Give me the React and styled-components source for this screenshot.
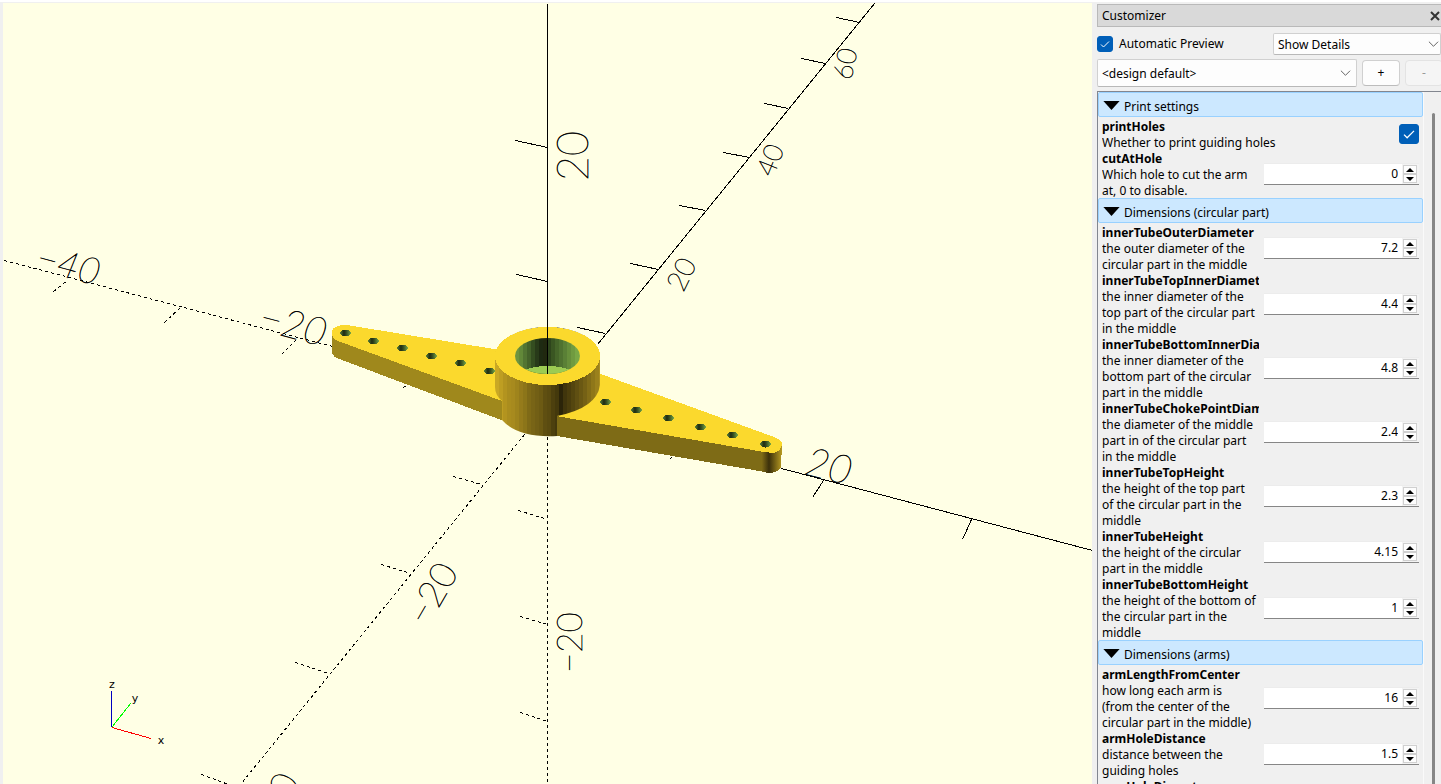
import { useState } from "react";
import styled, { createGlobalStyle } from "styled-components";

const sections = [
    {
        title: "Print settings",
        params: [
            { name: "printHoles", text: "Whether to print guiding holes", type: "bool", value: true },
            { name: "cutAtHole", text: "Which hole to cut the arm\nat, 0 to disable.", value: "0" },
        ],
    },
    {
        title: "Dimensions (circular part)",
        params: [
            { name: "innerTubeOuterDiameter", text: "the outer diameter of the\ncircular part in the middle", value: "7.2" },
            { name: "innerTubeTopInnerDiameter", text: "the inner diameter of the\ntop part of the circular part\nin the middle", value: "4.4" },
            { name: "innerTubeBottomInnerDiameter", text: "the inner diameter of the\nbottom part of the circular\npart in the middle", value: "4.8" },
            { name: "innerTubeChokePointDiameter", text: "the diameter of the middle\npart in of the circular part\nin the middle", value: "2.4" },
            { name: "innerTubeTopHeight", text: "the height of the top part\nof the circular part in the\nmiddle", value: "2.3" },
            { name: "innerTubeHeight", text: "the height of the circular\npart in the middle", value: "4.15" },
            { name: "innerTubeBottomHeight", text: "the height of the bottom of\nthe circular part in the\nmiddle", value: "1" },
        ],
    },
    {
        title: "Dimensions (arms)",
        params: [
            { name: "armLengthFromCenter", text: "how long each arm is\n(from the center of the\ncircular part in the middle)", value: "16" },
            { name: "armHoleDistance", text: "distance between the\nguiding holes", value: "1.5" },
            { name: "armHoleDiameter", text: "diameter of the\nguiding holes", value: "1" },
        ],
    },
];

// [x1, y1, x2, y2]
const solidLines = [
    [547, 3, 547, 327],
    [874, 3, 597, 344],
    [781, 468, 1092, 550],
    [859, 22, 836, 17],
    [825, 63, 801, 58],
    [788, 108, 764, 103],
    [749, 157, 723, 152],
    [705, 210, 679, 205],
    [658, 269, 630, 263],
    [605, 333, 577, 327],
    [547, 147, 515, 140],
    [547, 281, 516, 274],
    [823, 480, 812, 497],
    [971, 519, 962, 539],
];

const dashedLines = [
    [4, 260, 332, 346],
    [547, 436, 547, 784],
    [524, 434, 240, 784],
    [53, 291, 68, 279],
    [164, 322, 180, 307],
    [281, 354, 296, 339],
    [403, 387, 406, 385],
    [669, 459, 672, 456],
    [453, 476, 481, 484],
    [381, 564, 410, 573],
    [295, 662, 328, 673],
    [201, 774, 228, 784],
    [518, 510, 547, 519],
    [520, 616, 547, 624],
    [520, 712, 547, 721],
];

const axisLabels = [
    { text: "20", x: 588, y: 181, angle: -90, size: 43 },
    { text: "20", x: 683, y: 293, angle: -64, size: 28 },
    { text: "40", x: 773, y: 178, angle: -68, size: 27 },
    { text: "60", x: 851, y: 81, angle: -78, size: 27 },
    { text: "20", x: 803, y: 474, angle: 14, size: 40, italic: true },
    { text: "−20", x: 257, y: 329, angle: 15, size: 39, italic: true },
    { text: "−40", x: 34, y: 269, angle: 15, size: 37, italic: true },
    { text: "−20", x: 427, y: 628, angle: -60, size: 37 },
    { text: "−20", x: 582, y: 673, angle: -90, size: 35 },
    { text: "−40", x: 268, y: 840, angle: -60, size: 38 },
];

const leftHoles = [[345, 333], [373, 341], [402, 348], [431, 356], [460, 363], [489, 371]];
const rightHoles = [[605, 402], [636, 410], [668, 418], [700, 427], [732, 435], [765, 444]];

const tubeShades = [
    "#c9a824", "#be9e22", "#b3941f", "#aa8d1e", "#a78a1e", "#9f841c", "#957b1b", "#8c7519", "#7f6a17",
    "#786416", "#725f15", "#6c5a13", "#5f4f11", "#5a4b10", "#4d400e", "#44390c", "#2b2409", "#40350c",
    "#4a3d0d", "#54460f", "#5f4f12", "#6a5813", "#756115", "#826c17", "#8f7719", "#9b811c", "#ad9020",
];

const boreShades = [
    "#6d9440", "#628839", "#527432", "#44622a", "#344d20", "#283a19", "#1e2a12", "#20280f", "#2e451c",
    "#3a5622", "#456529", "#4f7230", "#5a8036", "#668e3b", "#709b40", "#7aa846", "#80ae49",
];

function Viewport() {
    return (
        <StyledViewport viewBox="3 3 1089 781" preserveAspectRatio="xMidYMid slice" role="img" aria-label="3D preview">
            <defs>
                <clipPath id="tube">
                    <path d="M495 357 A52.5 30 0 0 1 600 357 V385 Q597 408 557 416 V436 Q518 438 502 420 V401 Q495 395 495 387 Z" />
                </clipPath>
                <clipPath id="bore">
                    <ellipse cx="547.5" cy="356" rx="32.5" ry="18" />
                </clipPath>
                <linearGradient id="hole">
                    <stop offset="0" stopColor="#5d8238" />
                    <stop offset="0.35" stopColor="#1f2b12" />
                    <stop offset="0.55" stopColor="#33491f" />
                    <stop offset="1" stopColor="#7aa845" />
                </linearGradient>
                <linearGradient id="tip">
                    <stop offset="0" stopColor="#7d6916" />
                    <stop offset="0.35" stopColor="#3b300b" />
                    <stop offset="0.6" stopColor="#6b5913" />
                    <stop offset="1" stopColor="#b89b22" />
                </linearGradient>
            </defs>

            <StyledLines>
                {solidLines.map(([x1, y1, x2, y2], index) => (
                    <line key={index} x1={x1 + 0.5} y1={y1 + 0.5} x2={x2 + 0.5} y2={y2 + 0.5} />
                ))}
            </StyledLines>
            <StyledLines $dashed>
                {dashedLines.map(([x1, y1, x2, y2], index) => (
                    <line key={index} x1={x1 + 0.5} y1={y1 + 0.5} x2={x2 + 0.5} y2={y2 + 0.5} />
                ))}
            </StyledLines>
            {axisLabels.map(({ text, x, y, angle, size, italic }) => (
                <StyledAxisLabel key={`${x}-${y}`} x={x} y={y} fontSize={size} $italic={italic} transform={`rotate(${angle} ${x} ${y})`}>
                    {text}
                </StyledAxisLabel>
            ))}

            {/* Arms */}
            <g shapeRendering="crispEdges">
                <path fill="#9f881c" d="M331.5 335 L332 352 Q333 357 338 358.5 L504 421 V400 Z" />
                <path fill="#fbd92d" d="M331.5 333 Q332 325 346 325 L353 326 L500 350 L548 385 L502 401 L338 341 Q331.5 338 331.5 333 Z" />
                <path fill="#7e6b16" d="M557 414 L765 452 V472 L557 436 Z" />
                <path fill="url(#tip)" d="M762 450 L782 443 L781 468 Q777 473 769 473 L762 472 Z" />
                <path fill="#fbd92d" d="M598 373 L774 437 Q782 440 782 444 Q781 451 774 453 L764 452 L556 416 L560 390 Z" />
                {[...leftHoles, ...rightHoles].map(([cx, cy]) => (
                    <ellipse key={cx} cx={cx + 0.5} cy={cy} rx="5.5" ry="3.5" fill="url(#hole)" />
                ))}

                {/* Tube */}
                <g clipPath="url(#tube)">
                    {tubeShades.map((shade, index) => (
                        <rect key={shade} x={495 + index * 4} y="327" width="4" height="112" fill={shade} />
                    ))}
                </g>
                <ellipse cx="547.5" cy="356" rx="52.5" ry="29" fill="#fbd92d" />
                <g clipPath="url(#bore)">
                    {boreShades.map((shade, index) => (
                        <rect key={shade} x={515 + index * 4} y="337" width="4" height="38" fill={shade} />
                    ))}
                    <ellipse cx="547.5" cy="380" rx="33" ry="14" fill="#9ccb52" />
                </g>
                <line x1="547.5" y1="326" x2="547.5" y2="374" stroke="#000" />
            </g>

            {/* Orientation marker */}
            <g shapeRendering="crispEdges">
                <line x1="111.5" y1="691" x2="111.5" y2="727" stroke="#0000c0" />
                <line x1="112" y1="727" x2="131" y2="703" stroke="#00ff00" />
                <line x1="112" y1="727.5" x2="151" y2="738.5" stroke="#ff0000" />
            </g>
            <StyledMarkerLabel x="112" y="688">z</StyledMarkerLabel>
            <StyledMarkerLabel x="135" y="702">y</StyledMarkerLabel>
            <StyledMarkerLabel x="161" y="744">x</StyledMarkerLabel>
        </StyledViewport>
    );
}

function Chevron() {
    return (
        <StyledChevron viewBox="0 0 12 8">
            <path d="M1 1.5 L6 6.5 L11 1.5" />
        </StyledChevron>
    );
}

function CheckBox({ id, large, defaultChecked }) {
    return (
        <StyledCheck $large={large}>
            <input id={id} type="checkbox" defaultChecked={defaultChecked} />
            <svg viewBox="0 0 16 16">
                <path d="M4 8.5 L6.5 11 L12 5.5" />
            </svg>
        </StyledCheck>
    );
}

function SpinBox({ id, initial }) {
    const [value, setValue] = useState(initial);
    const step = (delta) => setValue(String(Math.round((Number(value) + delta) * 100) / 100));

    return (
        <StyledSpinBox>
            <StyledSpinInput id={id} value={value} onChange={(event) => setValue(event.target.value)} />
            <StyledSpinButtons>
                <StyledSpinButton type="button" aria-label="Increase" onClick={() => step(1)}>
                    <svg viewBox="0 0 8 4"><path d="M0 4 L4 0 L8 4 Z" /></svg>
                </StyledSpinButton>
                <StyledSpinButton type="button" aria-label="Decrease" onClick={() => step(-1)}>
                    <svg viewBox="0 0 8 4"><path d="M0 0 L4 4 L8 0 Z" /></svg>
                </StyledSpinButton>
            </StyledSpinButtons>
        </StyledSpinBox>
    );
}

function Section({ title, params }) {
    const [open, setOpen] = useState(true);

    return (
        <section>
            <StyledSectionHeader type="button" aria-expanded={open} onClick={() => setOpen(!open)}>
                <svg viewBox="0 0 18 10"><path d="M0 0 H18 L9 10 Z" /></svg>
                {title}
            </StyledSectionHeader>
            {open && params.map(({ name, text, type, value }) => (
                <StyledParam key={name}>
                    <StyledParamLabel htmlFor={name}>
                        <strong>{name}</strong>
                        <span>{text}</span>
                    </StyledParamLabel>
                    {type === "bool" ? <CheckBox id={name} large defaultChecked={value} /> : <SpinBox id={name} initial={value} />}
                </StyledParam>
            ))}
        </section>
    );
}

export default function App() {
    return (
        <>
            <GlobalStyle />
            <StyledWindow>
                <Viewport />
                <StyledDock>
                    <StyledTitleBar>
                        Customizer
                        <StyledCloseButton type="button" aria-label="Close">
                            <svg viewBox="0 0 10 10"><path d="M1 1 L9 9 M9 1 L1 9" /></svg>
                        </StyledCloseButton>
                    </StyledTitleBar>
                    <StyledPreviewRow>
                        <CheckBox id="autoPreview" defaultChecked />
                        <label htmlFor="autoPreview">Automatic Preview</label>
                        <StyledDetailsBox>
                            <StyledSelect aria-label="Details">
                                <option>Show Details</option>
                            </StyledSelect>
                            <Chevron />
                        </StyledDetailsBox>
                    </StyledPreviewRow>
                    <StyledPresetRow>
                        <StyledPresetBox>
                            <StyledSelect aria-label="Preset">
                                <option>&lt;design default&gt;</option>
                            </StyledSelect>
                            <Chevron />
                        </StyledPresetBox>
                        <StyledPresetButton type="button">+</StyledPresetButton>
                        <StyledPresetButton type="button" disabled>-</StyledPresetButton>
                    </StyledPresetRow>
                    <StyledScrollArea>
                        <StyledParams>
                            {sections.map((section) => (
                                <Section key={section.title} {...section} />
                            ))}
                        </StyledParams>
                        <StyledScrollTrack>
                            <StyledScrollThumb />
                        </StyledScrollTrack>
                    </StyledScrollArea>
                </StyledDock>
            </StyledWindow>
        </>
    );
}

const GlobalStyle = createGlobalStyle`
    * {
        box-sizing: border-box;
    }

    body {
        margin: 0;
        background: #f0f0f0;
        overflow: hidden;
    }

    body, button, input, select {
        font-family: "Noto Sans", "Open Sans", sans-serif;
        font-size: 12px;
        line-height: 16px;
        color: #000;
    }
`;

const StyledWindow = styled.main`
    display: flex;
    height: 100vh;
    padding: 1px 0 0 3px;
    border-top: 2px solid #fff;
`;

const StyledViewport = styled.svg`
    flex: 1;
    min-width: 0;
    height: 100%;
    background: #ffffe5;
`;

const StyledLines = styled.g`
    stroke: #000;
    stroke-width: 1;
    stroke-dasharray: ${({ $dashed }) => ($dashed ? "3 3" : "none")};
    shape-rendering: crispEdges;
`;

const StyledAxisLabel = styled.text`
    font-family: Lato, Inter, sans-serif;
    font-weight: 100;
    font-style: ${({ $italic }) => ($italic ? "italic" : "normal")};
    stroke: #000;
    stroke-width: 0.5;
`;

const StyledMarkerLabel = styled.text`
    font-family: "DejaVu Sans", sans-serif;
    font-size: 11px;
    text-anchor: middle;
`;

const StyledDock = styled.aside`
    display: flex;
    flex-direction: column;
    flex: 0 0 349px;
    min-height: 0;
    padding: 1px 0 0 5px;
    overflow: hidden;
`;

const StyledTitleBar = styled.header`
    display: flex;
    align-items: center;
    justify-content: space-between;
    flex: 0 0 23px;
    padding: 1px 1px 0 4px;
    background: #d9d9d9;
    border: 1px solid #b9b9b9;
    border-right: 0;
`;

const StyledCloseButton = styled.button`
    display: flex;
    padding: 0;
    border: 0;
    background: none;

    svg {
        width: 10px;
        height: 10px;
        fill: none;
        stroke: #333;
        stroke-width: 2;
    }
`;

const StyledPreviewRow = styled.div`
    display: flex;
    align-items: center;
    gap: 6px;
    flex: 0 0 22px;
    margin-top: 6px;
`;

const StyledPresetRow = styled.div`
    display: flex;
    align-items: center;
    gap: 5px;
    flex: 0 0 28px;
    margin: 4px 0;
`;

const StyledDetailsBox = styled.div`
    position: relative;
    flex: 0 0 168px;
    height: 22px;
    margin-left: auto;
`;

const StyledPresetBox = styled.div`
    position: relative;
    flex: 0 0 260px;
    height: 28px;
`;

const StyledSelect = styled.select`
    appearance: none;
    width: 100%;
    height: 100%;
    padding: 1px 20px 0 4px;
    border: 1px solid #d0d0d0;
    border-bottom-color: #b8b8b8;
    border-radius: 2px;
    background: #fdfdfd;
`;

const StyledChevron = styled.svg`
    position: absolute;
    top: calc(50% - 4px);
    right: 6px;
    width: 11px;
    height: 8px;
    fill: none;
    stroke: #555;
    stroke-width: 1;
    pointer-events: none;

    ${StyledDetailsBox} & {
        right: 2px;
    }
`;

const StyledPresetButton = styled.button`
    flex: 0 0 38px;
    height: 26px;
    padding: 0;
    border: 1px solid #d0d0d0;
    border-bottom-color: #bcbcbc;
    border-radius: 4px;
    background: #fdfdfd;

    &:disabled {
        border-color: #e3e3e3;
        background: #f5f5f5;
        color: #9a9a9a;
    }
`;

const StyledScrollArea = styled.div`
    display: flex;
    flex: 1;
    min-height: 0;
    border-top: 1px solid #82868f;
    border-left: 1px solid #82868f;
`;

const StyledParams = styled.div`
    flex: 1;
    min-width: 0;
    overflow: hidden;
`;

const StyledSectionHeader = styled.button`
    display: flex;
    align-items: center;
    gap: 4px;
    width: 100%;
    height: 25px;
    margin-bottom: 1px;
    padding: 4px 4px 0;
    border: 1px solid #99d1ff;
    border-radius: 2px;
    background: #cce8ff;
    text-align: left;

    svg {
        width: 17px;
        height: 9px;
        margin-bottom: 3px;
    }
`;

const StyledParam = styled.div`
    display: flex;
    align-items: center;
    justify-content: space-between;
    gap: 5px;
    padding: 0 4px;
`;

const StyledParamLabel = styled.label`
    display: flex;
    flex: 1;
    flex-direction: column;
    min-width: 0;
    margin-bottom: -1px;
    padding-top: 1px;
    overflow: hidden;
    white-space: pre;
`;

const StyledCheck = styled.span`
    display: grid;
    flex: none;
    width: ${({ $large }) => ($large ? 20 : 16)}px;
    height: ${({ $large }) => ($large ? 20 : 16)}px;

    input, svg {
        grid-area: 1 / 1;
        width: 100%;
        height: 100%;
        margin: 0;
    }

    input {
        appearance: none;
        border: 1px solid #005fb8;
        border-radius: 3px;
        background: #fff;
    }

    input:checked {
        background: #005fb8;
    }

    svg {
        fill: none;
        stroke: #fff;
        stroke-width: 1;
        pointer-events: none;
    }
`;

const StyledSpinBox = styled.div`
    display: flex;
    flex: 0 0 155px;
    min-width: 0;
    height: 22px;
    border: 1px solid #ececec;
    border-width: 1px 0;
    border-bottom-color: #868686;
    background: #f3f3f3;
`;

const StyledSpinInput = styled.input`
    flex: 1;
    min-width: 0;
    padding: 0 4px 0 0;
    border: 0;
    background: #fff;
    text-align: right;
`;

const StyledSpinButtons = styled.div`
    display: flex;
    flex: 0 0 17px;
    flex-direction: column;
    padding: 1px 2px 1px 1px;
`;

const StyledSpinButton = styled.button`
    display: flex;
    flex: 1;
    align-items: center;
    justify-content: center;
    padding: 0;
    border: 1px solid #d0d0d0;
    background: #fdfdfd;

    svg {
        width: 8px;
        height: 4px;
    }
`;

const StyledScrollTrack = styled.div`
    flex: 0 0 18px;
    padding: 21px 0 0 8px;
    border-left: 1px solid #fafafa;
`;

const StyledScrollThumb = styled.div`
    width: 3px;
    height: 100%;
    border-radius: 2px 2px 0 0;
    background: #868686;
`;
